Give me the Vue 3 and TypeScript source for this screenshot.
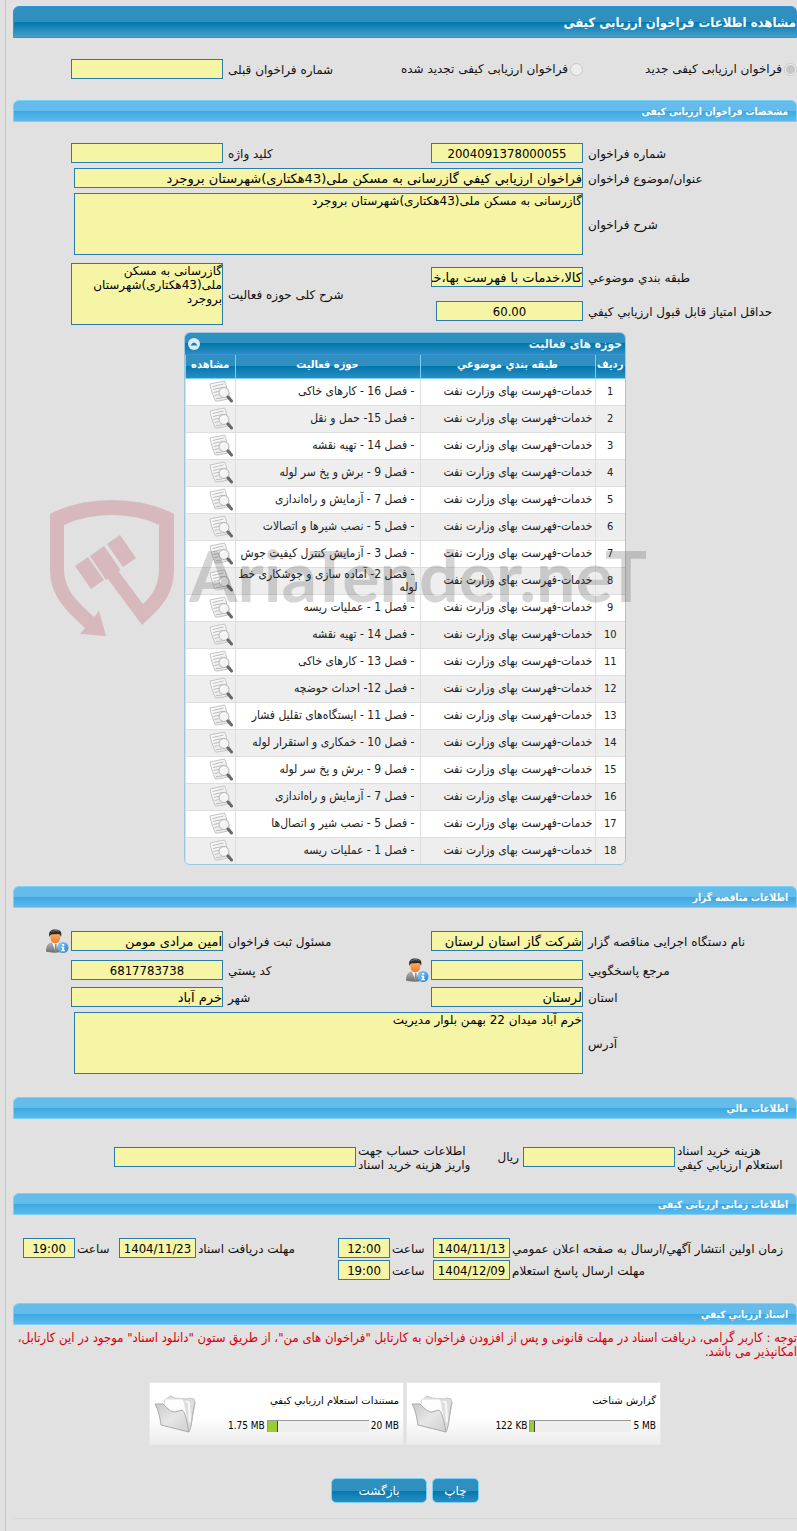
<script setup lang="ts">
interface ActivityRow {
  id: number
  category: string
  area: string
}

interface FileBox {
  title: string
  used: string
  limit: string
  percent: number
}

const category = 'خدمات-فهرست بهای وزارت نفت'

const areas: string[] = [
  '- فصل 16 - کارهای خاکی',
  '- فصل 15- حمل و نقل',
  '- فصل 14 - تهیه نقشه',
  '- فصل 9 - برش و پخ سر لوله',
  '- فصل 7 - آزمایش و راه‌اندازی',
  '- فصل 5 - نصب شیرها و اتصالات',
  '- فصل 3 - آزمایش کنترل کیفیت جوش',
  '- فصل 2- آماده سازی و جوشکاری خط لوله',
  '- فصل 1 - عملیات ریسه',
  '- فصل 14 - تهیه نقشه',
  '- فصل 13 - کارهای خاکی',
  '- فصل 12- احداث حوضچه',
  '- فصل 11 - ایستگاه‌های تقلیل فشار',
  '- فصل 10 - خمکاری و استقرار لوله',
  '- فصل 9 - برش و پخ سر لوله',
  '- فصل 7 - آزمایش و راه‌اندازی',
  '- فصل 5 - نصب شیر و اتصال‌ها',
  '- فصل 1 - عملیات ریسه',
]

const rows: ActivityRow[] = areas.map((area, i) => ({ id: i + 1, category, area }))

const files: FileBox[] = [
  { title: 'گزارش شناخت', used: '122 KB', limit: '5 MB', percent: 4 },
  { title: 'مستندات استعلام ارزیابي کیفي', used: '1.75 MB', limit: '20 MB', percent: 10 },
]
</script>

<template>
  <main class="page" dir="rtl">
    <svg class="defs" width="0" height="0" aria-hidden="true">
      <defs>
        <linearGradient id="paper" x1="0" y1="0" x2="1" y2="1">
          <stop offset="0" stop-color="#ffffff" />
          <stop offset="1" stop-color="#e2e2e2" />
        </linearGradient>
        <linearGradient id="suit" x1="0" y1="0" x2="0" y2="1">
          <stop offset="0" stop-color="#b4b4b4" />
          <stop offset="1" stop-color="#6e6e6e" />
        </linearGradient>
        <linearGradient id="face" x1="0" y1="0" x2="0" y2="1">
          <stop offset="0" stop-color="#ffb765" />
          <stop offset="1" stop-color="#f27a2c" />
        </linearGradient>
        <linearGradient id="info" x1="0" y1="0" x2="1" y2="1">
          <stop offset="0" stop-color="#8fd3fb" />
          <stop offset="1" stop-color="#1b7fd6" />
        </linearGradient>
        <linearGradient id="pocket" x1="0" y1="0" x2="1" y2="1">
          <stop offset="0" stop-color="#c9c9c9" />
          <stop offset=".5" stop-color="#e6e6e6" />
          <stop offset="1" stop-color="#cfcfcf" />
        </linearGradient>
      </defs>
      <symbol id="icon-view" viewBox="0 0 24 24">
        <path d="M1 4 L15.500 1 C16.500 3 17 4 17.500 7 C18 11 20 15 21.500 18 C17 19.500 12 21 6.500 21 C4 16 2 10 1 4Z" fill="url(#paper)" stroke="#c4c4c4" />
        <path d="M3.500 6.500 L14.500 4 M4 9.500 L14 7.300 M4.500 12.500 L10 11.300 M5.500 15.500 L9.500 14.700 M7 18.600 L13 18" stroke="#bdbdbd" fill="none" />
        <circle cx="15" cy="12.500" r="5" fill="#f4f4f4" fill-opacity=".85" stroke="#b4b4b4" />
        <path d="M12 11.500 Q13.500 9 16.500 9.500" stroke="#ffffff" fill="none" />
        <path d="M19 17 L22.500 21" stroke="#686868" stroke-width="3" stroke-linecap="round" />
      </symbol>
      <symbol id="icon-user" viewBox="0 0 24 24">
        <path d="M1 22.500 C1 16.500 3 14 7 13.500 H13 C17 14 19 17 19 22.500 C14 24 5 24 1 22.500Z" fill="url(#suit)" />
        <path d="M7 13.500 L10.500 22.500 L14 13.500Z" fill="#ffffff" />
        <path d="M10 15 H11.500 L12 21 L10.700 22.500 L9.500 21Z" fill="#8c8c8c" />
        <ellipse cx="10.300" cy="8.500" rx="5" ry="6" fill="url(#face)" />
        <path d="M4.500 8 C3 3 6 .3 10 .5 C15 .2 17.500 3 16 8 C15.500 5.500 14 5 12.500 5 C9 5.500 6 5 5.500 6Z" fill="#2b2b2b" />
        <path d="M6 3 C8 1.500 12 1.200 14 2.500" stroke="#7d7d7d" fill="none" />
        <circle cx="18" cy="18.500" r="5.500" fill="url(#info)" />
        <path d="M17 15 H19.200 V16.700 H17Z M16.300 17.700 H19.200 V21 H20 V22.200 H16.300 V21 H17.200 V18.800 H16.300Z" fill="#ffffff" />
      </symbol>
      <symbol id="icon-folder" viewBox="0 0 42 40">
        <path d="M10 7 L16 2 L21 4 L33 5 L35 4 L40 5 L41 9 L37 32 L35 37 L20 30Z" fill="#dedede" stroke="#c6c6c6" />
        <path d="M10 10 L11 5 L28 5 L30 7 L33 22 L34 32 L20 30Z" fill="#fdfdfd" stroke="#e0e0e0" />
        <path d="M32 7 L35 9 L36 28" fill="none" stroke="#f8f8f8" stroke-width="2" />
        <path d="M1 10 L9 10 C14 15 17 18 21 18 L28 16 C32 19 33 29 35 38 L7 31 C6 25 5 17 1 10Z" fill="url(#pocket)" stroke="#a9a9a9" />
        <path d="M35 38 C38 33 38 18 41 8" fill="none" stroke="#b5b5b5" />
      </symbol>
    </svg>

    <h1 class="title-bar">مشاهده اطلاعات فراخوان ارزیابی کیفی</h1>

    <form class="form first" @submit.prevent>
      <label class="choice"><input type="radio" name="kind" checked disabled />فراخوان ارزیابی کیفی جدید</label>
      <label class="choice"><input type="radio" name="kind" disabled />فراخوان ارزیابی کیفی تجدید شده</label>
      <label class="label" for="prev-no">شماره فراخوان قبلی</label>
      <input id="prev-no" class="field" readonly />
    </form>

    <h2 class="section-bar">مشخصات فراخوان ارزیابی کیفی</h2>
    <section class="form">
      <label class="label" for="call-no">شماره فراخوان</label>
      <input id="call-no" class="field num" value="2004091378000055" readonly />
      <label class="label" for="keyword">کلید واژه</label>
      <input id="keyword" class="field" readonly />

      <label class="label" for="subject">عنوان/موضوع فراخوان</label>
      <input id="subject" class="field wide" value="فراخوان ارزيابي كيفي گازرسانی به مسکن ملی(43هکتاری)شهرستان بروجرد" readonly />

      <label class="label" for="desc">شرح فراخوان</label>
      <textarea id="desc" class="field area wide" readonly>گازرسانی به مسکن ملی(43هکتاری)شهرستان بروجرد</textarea>
    </section>
    <section class="form paired">
      <label class="label" for="class">طبقه بندي موضوعي</label>
      <input id="class" class="field" value="کالا،خدمات با فهرست بها،خدمات" readonly />
      <label class="label tall" for="scope">شرح کلی حوزه فعالیت</label>
      <textarea id="scope" class="field area tall" readonly>گازرسانی به مسکن ملی(43هکتاری)شهرستان بروجرد</textarea>
      <label class="label" for="score">حداقل امتیاز قابل قبول ارزیابي کیفي</label>
      <input id="score" class="field num score" value="60.00" readonly />
    </section>

    <section class="grid-box">
      <header class="grid-head">
        <h3>حوزه های فعالیت</h3>
        <button type="button" class="collapse" aria-label="بستن جدول">
          <svg viewBox="0 0 12 12" width="12" height="12"><circle cx="6" cy="6" r="6" fill="#d9ebf7" /><path d="M2.500 7.500 Q6 1.500 9.500 7.500Z" fill="#1c80b6" /></svg>
        </button>
      </header>
      <table class="grid">
        <colgroup><col class="c-no" /><col class="c-cat" /><col class="c-area" /><col class="c-view" /></colgroup>
        <thead>
          <tr><th>ردیف</th><th>طبقه بندي موضوعي</th><th>حوزه فعالیت</th><th>مشاهده</th></tr>
        </thead>
        <tbody>
          <tr v-for="row in rows" :key="row.id">
            <td class="no">{{ row.id }}</td>
            <td>{{ row.category }}</td>
            <td class="scope">{{ row.area }}</td>
            <td class="view">
              <button type="button" aria-label="مشاهده"><svg width="24" height="24"><use href="#icon-view" /></svg></button>
            </td>
          </tr>
        </tbody>
      </table>
    </section>

    <h2 class="section-bar">اطلاعات مناقصه گزار</h2>
    <section class="form owner">
      <label class="label" for="org">نام دستگاه اجرایی مناقصه گزار</label>
      <input id="org" class="field" value="شرکت گاز استان لرستان" readonly />
      <label class="label" for="registrar">مسئول ثبت فراخوان</label>
      <div class="with-icon">
        <input id="registrar" class="field" value="امین مرادی مومن" readonly />
        <button type="button" aria-label="اطلاعات مسئول"><svg width="24" height="24"><use href="#icon-user" /></svg></button>
      </div>

      <label class="label" for="contact">مرجع پاسخگويي</label>
      <div class="with-icon">
        <input id="contact" class="field" readonly />
        <button type="button" aria-label="اطلاعات مرجع"><svg width="24" height="24"><use href="#icon-user" /></svg></button>
      </div>
      <label class="label" for="post">كد پستي</label>
      <input id="post" class="field num" value="6817783738" readonly />

      <label class="label" for="province">استان</label>
      <input id="province" class="field" value="لرستان" readonly />
      <label class="label" for="city">شهر</label>
      <input id="city" class="field" value="خرم آباد" readonly />

      <label class="label" for="address">آدرس</label>
      <textarea id="address" class="field area wide" readonly>خرم آباد میدان 22 بهمن بلوار مدیریت</textarea>
    </section>

    <h2 class="section-bar">اطلاعات مالي</h2>
    <section class="money">
      <label class="label" for="fee">هزینه خرید اسناد<br />استعلام ارزیابي کیفي</label>
      <div class="unit-cell"><input id="fee" class="field" readonly /><span>ریال</span></div>
      <label class="label" for="account">اطلاعات حساب جهت<br />واریز هزینه خرید اسناد</label>
      <input id="account" class="field account" readonly />
    </section>

    <h2 class="section-bar">اطلاعات زمانی ارزیابی کیفی</h2>
    <section class="times">
      <label class="label" for="d1">زمان اولین انتشار آگهي/ارسال به صفحه اعلان عمومي</label>
      <input id="d1" class="field num" value="1404/11/13" readonly />
      <label class="label" for="t1">ساعت</label>
      <input id="t1" class="field num" value="12:00" readonly />
      <label class="label" for="d2">مهلت دریافت اسناد</label>
      <input id="d2" class="field num" value="1404/11/23" readonly />
      <label class="label" for="t2">ساعت</label>
      <input id="t2" class="field num hour" value="19:00" readonly />
      <label class="label" for="d3">مهلت ارسال پاسخ استعلام</label>
      <input id="d3" class="field num" value="1404/12/09" readonly />
      <label class="label" for="t3">ساعت</label>
      <input id="t3" class="field num" value="19:00" readonly />
    </section>

    <h2 class="section-bar">اسناد ارزیابي كیفي</h2>
    <p class="notice">توجه : کاربر گرامی، دریافت اسناد در مهلت قانونی و پس از افزودن فراخوان به کارتابل "فراخوان های من"، از طریق ستون "دانلود اسناد" موجود در این کارتابل، امکانپذیر می باشد.</p>

    <section class="files">
      <article v-for="file in files" :key="file.title" class="file">
        <div class="file-body">
          <p>{{ file.title }}</p>
          <div class="usage">
            <span dir="ltr">{{ file.limit }}</span>
            <div class="track"><div class="fill" :style="{ width: file.percent + '%' }"></div></div>
            <span dir="ltr">{{ file.used }}</span>
          </div>
        </div>
        <svg width="42" height="40" aria-hidden="true"><use href="#icon-folder" /></svg>
      </article>
    </section>

    <div class="actions">
      <button type="button" class="btn">چاپ</button>
      <button type="button" class="btn back">بازگشت</button>
    </div>

    <div class="watermark" dir="ltr" aria-hidden="true">
      <svg width="126" height="140" viewBox="0 0 126 140">
        <path d="M1 15 Q28 1 63 1 Q98 1 125 15 V70 C125 98 110 110 93 126 L59 80 L57 81 L41 57 L55 47 L71 70 L70 73 L94 105 C104 96 110 85 110 70 V26 Q90 16 63 16 Q36 16 15 26 V70 C15 92 30 104 45 118 L50 112 L57 137 L31 135 L36 129 C18 112 1 98 1 70Z" />
        <path d="M26 67 L39 58 L55 81 L42 90Z M58 45 L71 36 L87 59 L74 68Z" />
      </svg>
      <span>AriaTender.neT</span>
    </div>
  </main>
</template>

<style>
body {
  background: #e1e1e1;
}
</style>

<style scoped>
* {
  box-sizing: border-box;
}
.page {
  position: relative;
  overflow: hidden;
  margin-left: 5px;
  padding: 6px 0 12px 7px;
  border-left: 1px solid #c6c6c6;
  background: #e1e1e1;
  color: #111;
  font: 12px/14px "DejaVu Sans", sans-serif;
}
.defs {
  position: absolute;
}
h1, h2, h3, p {
  margin: 0;
  font-weight: normal;
}
button {
  padding: 0;
  border: 0;
  background: none;
  font: inherit;
  cursor: pointer;
}
svg {
  display: block;
}
.title-bar {
  height: 32px;
  border: 1px solid #2f93dc;
  border-radius: 6px 6px 0 0;
  background: linear-gradient(#2f8fbf 0, #2f8fbf 50%, #0078ae 50%, #4a9fca 100%);
  color: #fff;
  font: bold 13px/32px "DejaVu Sans Condensed", sans-serif;
}
.section-bar {
  height: 22px;
  padding: 0 8px;
  border: 1px solid #79d1f7;
  border-radius: 6px 6px 0 0;
  background: linear-gradient(#65bbea 0, #65bbea 50%, #3aa8e3 50%, #5fb9ea 100%);
  color: #fff;
  font: bold 10px/22px "DejaVu Sans Condensed", sans-serif;
}
.form {
  display: grid;
  grid-template-columns: 209fr 183fr 167fr 210fr;
  gap: 5px;
  align-items: center;
  padding-top: 21px;
}
.first {
  padding-bottom: 21px;
}
.paired {
  grid-template-rows: 34px 34px;
  row-gap: 0;
  padding-top: 5px;
}
.owner {
  padding-bottom: 23px;
}
.label {
  padding-top: 2px;
  text-align: left;
  white-space: nowrap;
}
.choice {
  display: flex;
  align-items: center;
  gap: 2px;
  white-space: nowrap;
}
.choice input {
  appearance: none;
  width: 13px;
  height: 13px;
  margin: 0;
  border: 1px solid #c8c8c8;
  border-radius: 50%;
  background: #ededed;
}
.choice input:checked {
  background: radial-gradient(circle, #c6c6c6 0 4px, #ededed 5px);
}
.field {
  width: 152px;
  height: 20px;
  margin: 0;
  padding: 0;
  border: 1px solid #2a7cac;
  border-radius: 0;
  outline: 0;
  background: #f6f4a5;
  color: #000;
  font: 13px/16px "DejaVu Sans", sans-serif;
}
.num {
  direction: ltr;
  font-family: "DejaVu Sans Condensed", sans-serif;
  text-align: center;
}
.score {
  width: 147px;
}
.wide {
  grid-column: 2 / span 3;
  width: 509px;
}
.area {
  display: block;
  height: 62px;
  font-size: 12px;
  line-height: 14px;
  resize: none;
  overflow: hidden;
}
.tall {
  grid-row: span 2;
}
.with-icon {
  display: flex;
  align-items: center;
  gap: 2px;
}
.grid-box {
  width: 442px;
  margin: 4px auto 21px;
  border: 1px solid #9cc6e0;
  border-radius: 6px;
  overflow: hidden;
}
.grid-head {
  display: flex;
  align-items: center;
  justify-content: space-between;
  height: 22px;
  padding: 0 3px;
  border-bottom: 1px solid #3a94dc;
  background: linear-gradient(#2f8fbf 0, #2f8fbf 50%, #0078ae 50%, #2d8cc0 100%);
  color: #eaf5fb;
}
.grid-head h3 {
  font: bold 12px/14px "DejaVu Sans Condensed", sans-serif;
}
.grid {
  width: 100%;
  border-collapse: collapse;
  table-layout: fixed;
  font: 12px/13px "DejaVu Sans Condensed", sans-serif;
  color: #222;
}
.c-no { width: 30px; }
.c-cat { width: 175px; }
.c-area { width: 185px; }
.grid th {
  height: 23px;
  padding: 0 0 4px;
  border: solid #79d1f7;
  border-width: 0 0 1px 1px;
  background: linear-gradient(#2f8fbf 0, #2f8fbf 50%, #0078ae 50%, #2d8cc0 100%);
  color: #fff;
  font-size: 11px;
  font-weight: bold;
  white-space: nowrap;
}
.grid td {
  height: 27px;
  padding: 0 2px;
  border: solid #dedede;
  border-width: 0 0 1px 1px;
  background: #fff;
}
.grid tr:nth-child(even) td {
  background: #eee;
}
.grid tr:last-child td {
  border-bottom: 0;
}
.grid td.no {
  font-size: 11px;
  text-align: center;
}
.grid td.scope {
  padding: 0 2px 0 0;
  text-indent: 3px;
}
.view button {
  display: block;
}
.money {
  display: grid;
  grid-template-columns: 120fr 185fr 130fr 343fr;
  gap: 2px;
  align-items: center;
  padding: 23px 0 21px;
}
.unit-cell {
  display: flex;
  align-items: center;
  gap: 4px;
}
.account {
  width: 242px;
}
.times {
  display: grid;
  grid-template-columns: 285fr 77px 39px 52px 138fr 77px 40px 62px;
  gap: 2px;
  align-items: center;
  padding: 23px 0;
}
.times .field {
  width: 100%;
}
.times .hour {
  width: 52px;
}
.notice {
  padding-top: 6px;
  color: #d8000c;
  font: 13px/14px "DejaVu Sans Condensed", sans-serif;
}
.files {
  display: flex;
  justify-content: center;
  gap: 2px;
  margin-top: 23px;
}
.file {
  display: flex;
  align-items: center;
  gap: 6px;
  width: 255px;
  height: 63px;
  padding: 0 4px;
  border: 1px solid #e8e8e8;
  background: linear-gradient(#fff 0, #fff 55%, #ececec 100%);
  color: #000;
  font-size: 10px;
}
.file-body {
  flex: 1;
}
.file-body p {
  margin-bottom: 11px;
}
.usage {
  display: flex;
  align-items: center;
  gap: 2px;
  width: 175px;
  font-family: "DejaVu Sans Condensed", sans-serif;
  white-space: nowrap;
}
.track {
  display: flex;
  justify-content: flex-end;
  flex: 0 0 102px;
  height: 12px;
  border: solid #999;
  border-width: 1px 0 0 1px;
  background: #eee;
}
.fill {
  border-right: 1px solid #444;
  background: #9acd32;
}
.actions {
  display: flex;
  justify-content: center;
  gap: 5px;
  padding: 33px 0 15px;
  border-bottom: 1px solid #d8d8d8;
}
.btn {
  width: 47px;
  height: 25px;
  border: 1px solid #79d1f7;
  border-radius: 5px;
  background: linear-gradient(#2f8fbf 0, #2f8fbf 50%, #0078ae 50%, #2d8cc0 100%);
  color: #fff;
}
.back {
  width: 96px;
}
.watermark {
  position: absolute;
  top: 499px;
  left: 43px;
  display: flex;
  align-items: center;
  gap: 14px;
  pointer-events: none;
  opacity: .2;
}
.watermark svg {
  fill: #b02030;
}
.watermark span {
  padding-top: 12px;
  color: #333;
  font: bold 70px/70px Lato, "Liberation Sans", sans-serif;
}
</style>
